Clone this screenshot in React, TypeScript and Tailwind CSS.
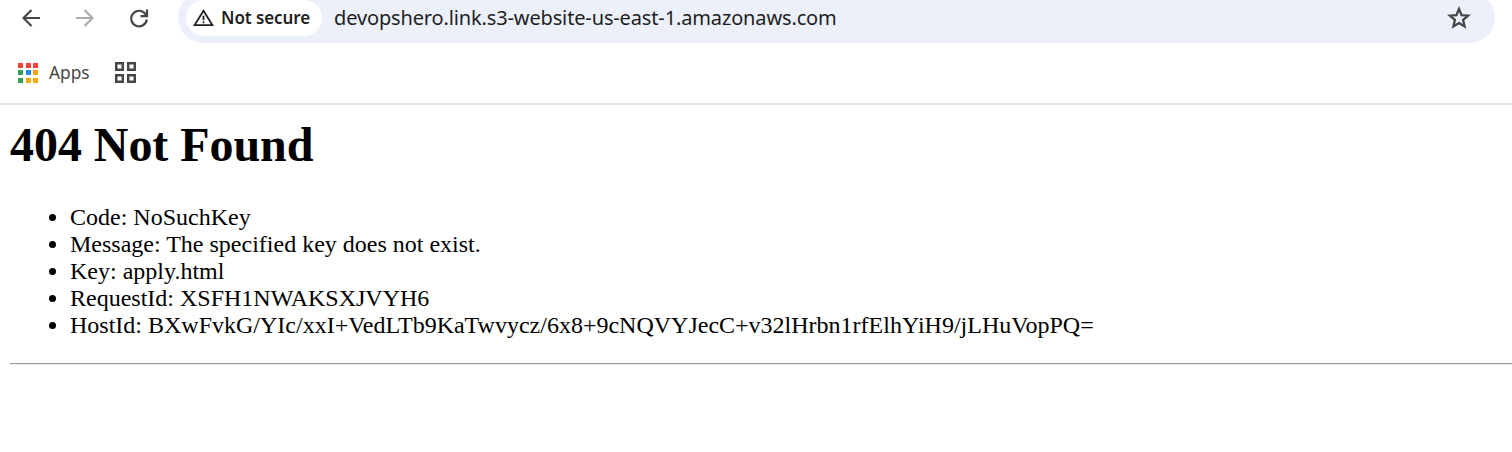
const appColors = [
  '#f44336', '#f44336', '#f44336',
  '#34a058', '#1e88f5', '#fba60a',
  '#34a058', '#fba60a', '#fba60a',
];

const details = [
  'Code: NoSuchKey',
  'Message: The specified key does not exist.',
  'Key: apply.html',
  'RequestId: XSFH1NWAKSXJVYH6',
  'HostId: BXwFvkG/YIc/xxI+VedLTb9KaTwvycz/6x8+9cNQVYJecC+v32lHrbn1rfElhYiH9/jLHuVopPQ=',
];

function Toolbar() {
  return (
    <div className="flex h-[43px] items-start overflow-hidden">
      <div className="flex h-9 w-[178px] shrink-0 items-center pl-[22px]">
        <svg width="18" height="18" viewBox="0 0 18 18" fill="none" stroke="#444746" strokeWidth="2.2">
          <path d="M18 9H2M9.5 1L1.5 9l8 8" />
        </svg>
        <svg className="ml-9" width="18" height="18" viewBox="0 0 18 18" fill="none" stroke="#ababab" strokeWidth="2.2">
          <path d="M0 9h16M8.5 1l8 8-8 8" />
        </svg>
        <svg className="ml-9" width="19" height="19" viewBox="0 0 19 19" fill="none" stroke="#444746" strokeWidth="2.2">
          <path d="M16.8 10.5a7.8 7.8 0 1 1-1.4-5.5L16.5 6.5M17 .5v6.6H10.5" />
        </svg>
      </div>
      <div className="-mt-2 flex h-[51px] w-[1317px] items-center rounded-full bg-[#ebf0fa] pl-2 pr-6">
        <div className="flex h-9 w-[136px] shrink-0 items-center rounded-full bg-white pl-[7px]">
          <svg width="21" height="18" viewBox="0 0 21 18" fill="none" stroke="#1f1f1f" strokeWidth="1.8">
            <path d="M10.5 1.8L1.6 16.1h17.8z" />
            <path d="M10.5 6.8v4.4M10.5 12.4v1.8" />
          </svg>
          <span className="ml-[7px] whitespace-nowrap font-['Noto_Sans',sans-serif] text-[17px] font-semibold leading-6 tracking-[-0.1px] text-[#1f1f1f]">
            Not secure
          </span>
        </div>
        <span className="ml-3 whitespace-nowrap font-['Noto_Sans',sans-serif] text-[20px] leading-7 tracking-[-0.14px] text-[#1f1f1f]">
          devopshero.link.s3-website-us-east-1.amazonaws.com
        </span>
        <svg className="ml-auto" width="24" height="24" viewBox="0 0 24 24" fill="none" stroke="#444746" strokeWidth="2.3">
          <path d="M12 3l2.6 6.1 6.5.5-5 4.3 1.5 6.5L12 17l-5.6 3.4 1.5-6.5-5-4.3 6.5-.5z" />
        </svg>
      </div>
    </div>
  );
}

function BookmarksBar() {
  return (
    <div className="flex h-[60px] items-center pl-[18px]">
      <div className="mb-px grid grid-cols-[5px_5px_5px] gap-[2.5px]">
        {appColors.map((color, i) => (
          <span key={i} className="size-[5px]" style={{ backgroundColor: color }} />
        ))}
      </div>
      <span className="ml-[11px] w-[66px] font-['Noto_Sans',sans-serif] text-[17.3px] leading-6 text-[#474747]">Apps</span>
      <svg className="mb-px" width="21" height="21" viewBox="0 0 21 21" fill="none" stroke="#444746" strokeWidth="2.5">
        <path d="M1.2 1.2h6.6v6.6h-6.6zM13.2 1.2h6.6v6.6h-6.6zM1.2 13.2h6.6v6.6h-6.6zM13.2 13.2h6.6v6.6h-6.6z" />
      </svg>
    </div>
  );
}

export default function App() {
  return (
    <div className="h-[452px] overflow-hidden bg-white">
      <header className="border-b-2 border-[#e1e1e1]">
        <Toolbar />
        <BookmarksBar />
      </header>
      <main className="pl-[10px] pt-[13px] font-['Liberation_Serif',serif] text-black">
        <h1 className="text-[48px] font-bold leading-[54px] tracking-[-0.05px]">404 Not Found</h1>
        <ul className="mt-8 list-disc pl-[60px] text-[24px] leading-[27px]">
          {details.map((item) => (
            <li key={item} className="whitespace-nowrap">{item}</li>
          ))}
        </ul>
        <hr className="mt-6 h-[2px] border-b border-t border-b-[#eeeeee] border-t-[#9a9a9a]" />
      </main>
    </div>
  );
}
